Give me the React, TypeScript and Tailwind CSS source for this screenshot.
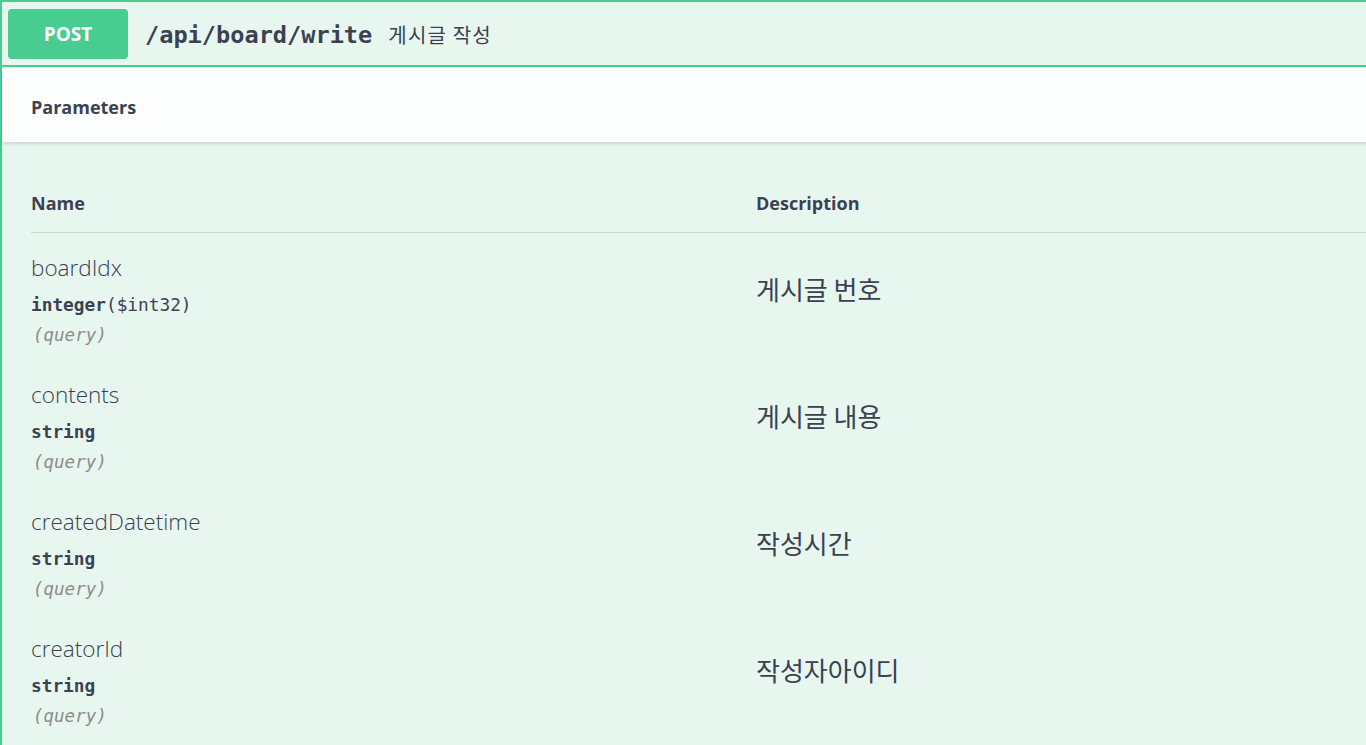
import React from "react";

const rows = [
  { name: "boardIdx", type: "integer", fmt: "($int32)", desc: "게시글 번호" },
  { name: "contents", type: "string", fmt: "", desc: "게시글 내용" },
  { name: "createdDatetime", type: "string", fmt: "", desc: "작성시간" },
  { name: "creatorId", type: "string", fmt: "", desc: "작성자아이디" },
];

const sans = "font-['Open_Sans','Noto_Sans_CJK_KR',sans-serif]";
const mono = "font-['DejaVu_Sans_Mono','Liberation_Mono',monospace]";
const kr = "font-['Noto_Sans_CJK_KR','Noto_Sans',sans-serif]";

export default function App() {
  return (
    <div className="w-[1366px] h-[745px] overflow-hidden bg-white">
      <div className="w-[1400px] min-h-[745px] border-t-2 border-l-2 border-[#49cc90] bg-[#e8f6f0]">
        {/* summary */}
        <div className="h-[65px] flex items-center border-b-2 border-[#49cc90] pl-[6px]">
          <div
            className={`w-[120px] h-[50px] rounded-[4px] bg-[#49cc90] flex items-center justify-center pt-[2px] text-white font-bold text-[19px] ${sans}`}
          >
            POST
          </div>
          <span className={`ml-[17px] pt-[4px] text-[23.6px] font-semibold text-[#3b4151] ${mono}`}>
            /api/board/write
          </span>
          <span className={`ml-[16px] pt-[2px] text-[20px] tracking-[1.2px] text-[#3b4151] ${kr}`}>
            게시글 작성
          </span>
        </div>
        {/* parameters heading */}
        <div className="h-[75px] bg-[#fcfefd] shadow-[0_2px_3px_rgba(0,0,0,0.12)] flex items-center pl-[29px] pt-[6px]">
          <span className={`text-[18px] font-bold text-[#3b4151] ${sans}`}>Parameters</span>
        </div>
        {/* table */}
        <div className="pl-[29px]">
          <div className="h-[91px] flex items-end border-b border-[#c6d6d0]">
            <div className={`w-[725px] pb-[15px] text-[18px] font-bold text-[#3b4151] ${sans}`}>Name</div>
            <div className={`pb-[15px] text-[18px] font-bold text-[#3b4151] ${sans}`}>Description</div>
          </div>
          {rows.map((r) => (
            <div key={r.name} className="h-[127px] flex">
              <div className="w-[725px] pt-[19px] flex flex-col">
                <div className={`h-[32px] flex items-center text-[22.5px] font-light text-[#3b4151] ${sans}`}>
                  {r.name}
                </div>
                <div className={`h-[38px] pt-[4px] flex items-center text-[17.8px] font-bold text-[#3b4151] ${mono}`}>
                  {r.type}
                  {r.fmt && <span className="font-normal text-[#3b4151]">{r.fmt}</span>}
                </div>
                <div className={`h-[24px] pt-[2px] flex items-center pl-[2px] text-[17.5px] italic text-[#8c8c8c] ${mono}`}>
                  (query)
                </div>
              </div>
              <div className={`pt-[37px] text-[26px] text-[#3b4151] ${kr}`}>
                <div className="h-[36px] flex items-center">{r.desc}</div>
              </div>
            </div>
          ))}
        </div>
      </div>
    </div>
  );
}
